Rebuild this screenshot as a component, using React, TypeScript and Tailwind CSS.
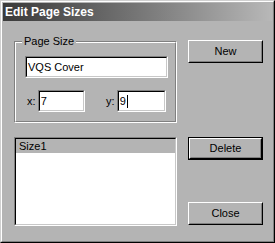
import React from "react";

function Sunken({ className, children }: { className: string; children?: React.ReactNode }) {
  return (
    <div className={`border border-t-[#808080] border-l-[#808080] border-b-white border-r-white ${className}`}>
      <div className="h-full w-full border border-t-black border-l-black border-b-[#c8c8c8] border-r-[#c8c8c8] bg-white">
        {children}
      </div>
    </div>
  );
}

function Button({ label, isDefault }: { label: string; isDefault?: boolean }) {
  const face = (
    <div className="h-full w-full border border-t-white border-l-white border-b-black border-r-black">
      <div className="flex h-full w-full items-center justify-center border border-t-[#b4b4b4] border-l-[#b4b4b4] border-b-[#808080] border-r-[#808080] text-[11px] text-black">
        {label}
      </div>
    </div>
  );
  return (
    <div className={`h-[23px] w-[75px] ${isDefault ? "border border-black" : ""}`}>
      {face}
    </div>
  );
}

export default function App() {
  return (
    <div className="h-[243px] w-[275px] border border-t-[#d0d0d0] border-l-[#d0d0d0] border-b-black border-r-black font-['Liberation_Sans',Arial,sans-serif]">
      <div className="h-full w-full border border-t-white border-l-white border-b-[#808080] border-r-[#808080] bg-[#b4b4b4] p-px">
        {/* title bar */}
        <div className="flex h-[18px] items-center bg-gradient-to-r from-[#3a3a3a] to-[#b8b8b8] pl-[2px] text-[12px] font-bold leading-[18px] text-white">
          Edit Page Sizes
        </div>

        <div className="flex pl-[11px] pt-[19px]">
          <div className="flex w-[163px] flex-col">
            {/* group box */}
            <div className="relative mt-px h-[82px] border border-t-[#808080] border-l-[#808080] border-b-white border-r-white">
              <div className="h-full w-full border border-t-white border-l-white border-b-[#808080] border-r-[#808080] px-[9px] pt-[13px]">
                <Sunken className="h-[22px] w-[143px]">
                  <div className="pl-px pt-[2px] text-[11px] leading-[14px] text-black">VQS Cover</div>
                </Sunken>
                <div className="mt-[12px] flex items-center text-[11px] text-black">
                  <span className="ml-[2px] w-[11px]">x:</span>
                  <Sunken className="h-[22px] w-[48px]">
                    <div className="pl-px pt-[2px] leading-[14px]">7</div>
                  </Sunken>
                  <span className="ml-[21px] w-[11px]">y:</span>
                  <Sunken className="h-[22px] w-[50px]">
                    <div className="flex items-center pl-px pt-[2px] leading-[14px]">
                      9<span className="ml-px inline-block h-[13px] w-px bg-black" />
                    </div>
                  </Sunken>
                </div>
              </div>
              <span className="absolute left-[7px] top-[-8px] bg-[#b4b4b4] px-[2px] text-[11px] leading-[14px] text-black">
                Page Size
              </span>
            </div>

            {/* list */}
            <Sunken className="mt-[14px] h-[89px] w-[163px]">
              <div className="h-[14px] bg-[#b4b4b4] pl-[3px] text-[11px] leading-[14px] text-black">Size1</div>
            </Sunken>
          </div>

          <div className="ml-[11px] flex flex-col">
            <Button label="New" />
            <div className="mt-[74px]">
              <Button label="Delete" isDefault />
            </div>
            <div className="mt-[42px]">
              <Button label="Close" />
            </div>
          </div>
        </div>
      </div>
    </div>
  );
}
